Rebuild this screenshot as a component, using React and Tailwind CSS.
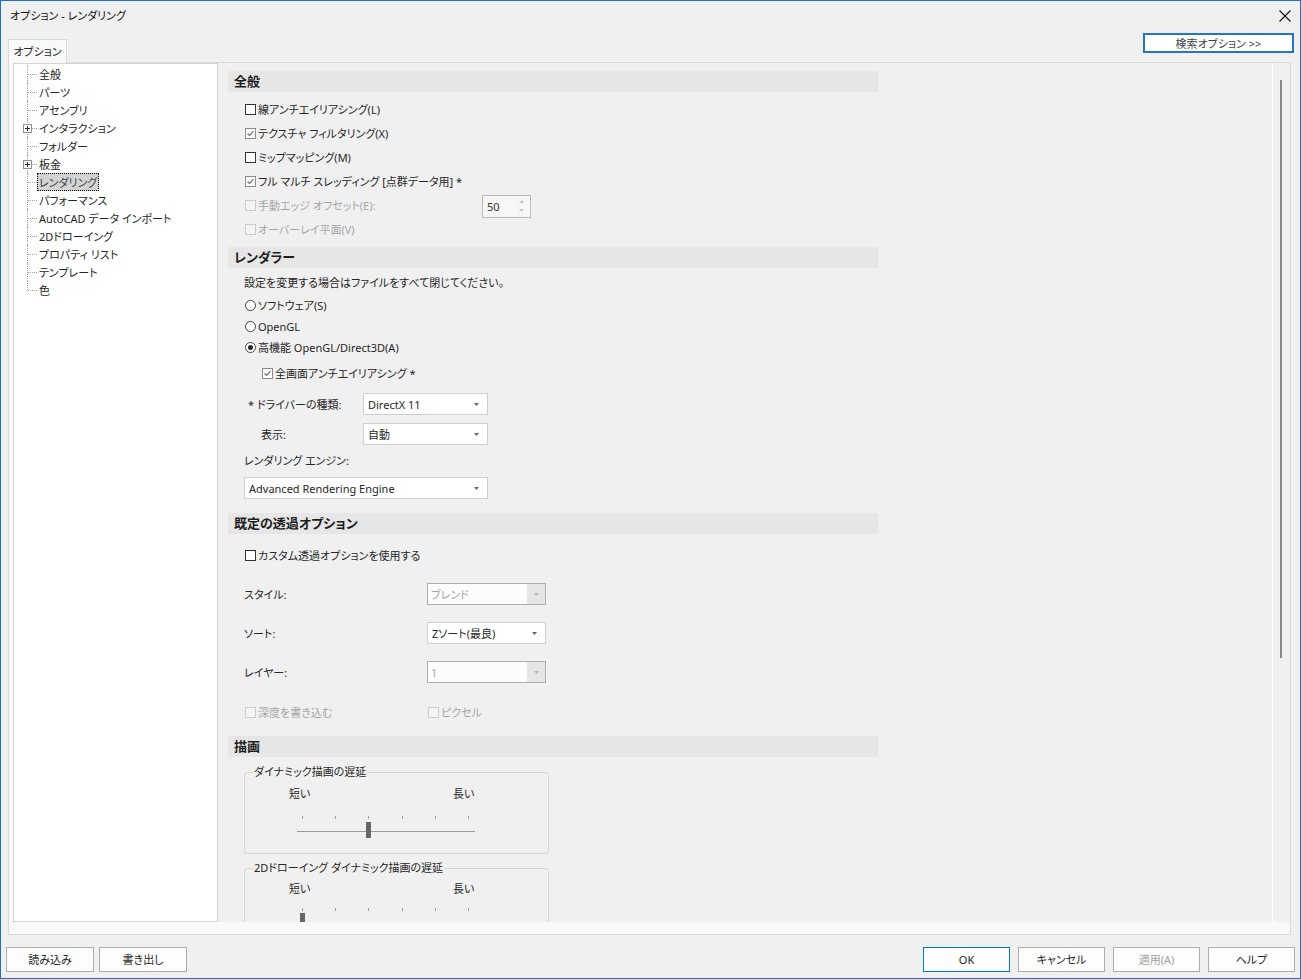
import React from 'react';

const treeItems = [
  { label: '全般' },
  { label: 'パーツ' },
  { label: 'アセンブリ' },
  { label: 'インタラクション', plus: true },
  { label: 'フォルダー' },
  { label: '板金', plus: true },
  { label: 'レンダリング', selected: true },
  { label: 'パフォーマンス' },
  { label: 'AutoCAD データ インポート' },
  { label: '2Dドローイング' },
  { label: 'プロパティ リスト' },
  { label: 'テンプレート' },
  { label: '色', last: true },
];

const Check = ({ checked, disabled }) => (
  <span
    className={`w-[11px] h-[11px] border flex items-center justify-center shrink-0 ${
      disabled ? 'border-[#cccccc] bg-[#f4f4f4]' : checked ? 'border-[#8c8c8c] bg-white' : 'border-[#333333] bg-white'
    }`}
  >
    {checked && (
      <svg width="9" height="9" viewBox="0 0 9 9">
        <path d="M1.5 4.5 L3.5 6.5 L7.5 2.2" fill="none" stroke="#707070" strokeWidth="1.2" />
      </svg>
    )}
  </span>
);

const Radio = ({ on }) => (
  <span className="w-[11px] h-[11px] rounded-full border border-[#444] bg-white flex items-center justify-center shrink-0">
    {on && <span className="w-[5px] h-[5px] rounded-full bg-[#222]" />}
  </span>
);

const Arrow = ({ color = '#555' }) => (
  <svg width="5" height="3" viewBox="0 0 5 3">
    <path d="M0 0 L5 0 L2.5 3 Z" fill={color} />
  </svg>
);

const Combo = ({ value, className = '' }) => (
  <div className={`h-[22px] bg-white border border-[#cfcfcf] flex items-center justify-between pl-[4px] pr-[8px] ${className}`}>
    <span>{value}</span>
    <Arrow color="#666" />
  </div>
);

const DisabledCombo = ({ value }) => (
  <div className="w-[119px] h-[22px] bg-[#fcfcfc] border border-[#adadad] flex items-center justify-between pl-[3px]">
    <span className="text-[#a8a8a8]">{value}</span>
    <div className="w-[18px] h-full bg-[#e6e6e6] flex items-center justify-center">
      <Arrow color="#b8b8b8" />
    </div>
  </div>
);

const Header = ({ children, className = '' }) => (
  <div className={`h-[21px] w-[650px] bg-[#e6e6e6] flex items-center pl-[6px] text-[13px] font-bold text-[#1e1e1e] ${className}`}>
    {children}
  </div>
);

const CheckRow = ({ label, checked, disabled }) => (
  <div className="h-[24px] flex items-center pl-[17px]">
    <Check checked={checked} disabled={disabled} />
    <span className={`ml-[2px] ${disabled ? 'text-[#a6a6a6]' : ''}`}>{label}</span>
  </div>
);

const Slider = ({ tickY, trackY, thumbX, thumbY }) => (
  <svg width="303" height="40" className="block">
    {[57, 90, 123, 157, 190, 223].map((x) => (
      <rect key={x} x={x} y={tickY} width="1" height="3" fill="#a0a0a0" />
    ))}
    <rect x="52" y={trackY} width="178" height="1" fill="#9a9a9a" />
    <rect x={thumbX} y={thumbY} width="5" height="16" fill="#666666" />
  </svg>
);

const Button = ({ children, primary, disabled }) => (
  <button
    className={`w-[87px] h-[25px] bg-[#fdfdfd] border flex items-center justify-center ${
      primary ? 'border-[#0078d7]' : 'border-[#adadad]'
    } ${disabled ? 'text-[#a0a0a0]' : 'text-[#262626]'}`}
  >
    {children}
  </button>
);

export default function App() {
  return (
    <div className="w-[1301px] h-[979px] bg-[#f0f0f0] border border-[#1d6fd0] flex flex-col overflow-hidden font-['Noto_Sans','Noto_Sans_CJK_JP',sans-serif] [font-feature-settings:'palt'] text-[11px] text-[#262626] leading-none whitespace-nowrap">
      {/* title bar */}
      <div className="h-[29px] flex items-center justify-between pl-[9px] pr-[9px] shrink-0">
        <span className="text-[#111]">オプション - レンダリング</span>
        <svg width="12" height="12" viewBox="0 0 12 12">
          <path d="M0.5 0.5 L11.5 11.5 M11.5 0.5 L0.5 11.5" stroke="#111" strokeWidth="1.1" />
        </svg>
      </div>

      {/* tab row */}
      <div className="h-[32px] flex justify-between shrink-0">
        <div className="ml-[7px] mt-[9px] w-[59px] h-[24px] bg-[#f9f9f9] border border-b-0 border-[#d9d9d9] flex items-center justify-center relative z-10">
          オプション
        </div>
        <button className="mt-[3px] mr-[6px] w-[151px] h-[20px] bg-white border-2 border-[#1f74d6] flex items-center justify-center text-[#444]">
          検索オプション &gt;&gt;
        </button>
      </div>

      {/* tab page */}
      <div className="ml-[7px] w-[1283px] h-[873px] bg-[#f9f9f9] border border-[#d9d9d9] flex pl-[4px] pb-[12px] shrink-0">
        {/* tree */}
        <div className="w-[205px] h-[859px] bg-white border border-[#d5d5d5] pt-[1px] shrink-0">
          {treeItems.map((it) => (
            <div key={it.label} className="h-[18px] flex items-center pl-[13px]">
              <div className="relative w-[10px] h-[18px]">
                <div className={`absolute left-0 top-0 border-l border-dotted border-[#a0a0a0] ${it.last ? 'h-[9px]' : 'h-[18px]'}`} />
                <div className="absolute left-[1px] top-[9px] w-[9px] border-t border-dotted border-[#a0a0a0]" />
                {it.plus && (
                  <div className="absolute left-[-4px] top-[5px] w-[9px] h-[9px] bg-white border border-[#919191] flex items-center justify-center">
                    <svg width="5" height="5" viewBox="0 0 5 5">
                      <path d="M0 2.5 H5 M2.5 0 V5" stroke="#1c2a5c" strokeWidth="1" />
                    </svg>
                  </div>
                )}
              </div>
              <span
                className={`h-[18px] flex items-center px-[2px] ${
                  it.selected ? 'bg-[#d3d3d3] outline-1 outline-dotted outline-black -outline-offset-1 text-[#444]' : ''
                }`}
              >
                {it.label}
              </span>
            </div>
          ))}
        </div>

        {/* content */}
        <div className="flex-1 h-[859px] bg-[#f0f0f0] flex overflow-hidden">
          <div className="flex-1 overflow-hidden pl-[10px] pt-[8px]">
            <Header>全般</Header>
            <div className="mt-[5px]">
              <CheckRow label="線アンチエイリアシング(L)" />
              <CheckRow label="テクスチャ フィルタリング(X)" checked />
              <CheckRow label="ミップマッピング(M)" />
              <CheckRow label="フル マルチ スレッディング [点群データ用] *" checked />
              <div className="h-[24px] flex items-center pl-[17px]">
                <div className="w-[237px] flex items-center">
                  <Check disabled />
                  <span className="ml-[2px] text-[#a6a6a6]">手動エッジ オフセット(E):</span>
                </div>
                <div className="w-[49px] h-[23px] mt-[2px] border border-[#b9b9b9] bg-[#f7f7f7] flex items-center justify-between pl-[4px] pr-[6px]">
                  <span className="text-[#333]">50</span>
                  <div className="flex flex-col gap-[6px]">
                    <svg width="5" height="3" viewBox="0 0 5 3"><path d="M0 3 L5 3 L2.5 0 Z" fill="#c4c4c4" /></svg>
                    <Arrow color="#c4c4c4" />
                  </div>
                </div>
              </div>
              <CheckRow label="オーバーレイ平面(V)" disabled />
            </div>

            <Header className="mt-[6px]">レンダラー</Header>
            <div className="mt-[4px] h-[20px] flex items-center pl-[16px]">設定を変更する場合はファイルをすべて閉じてください。</div>
            <div className="mt-[3px]">
              {[
                ['ソフトウェア(S)', false],
                ['OpenGL', false],
                ['高機能 OpenGL/Direct3D(A)', true],
              ].map(([label, on]) => (
                <div key={label} className="h-[21px] flex items-center pl-[17px]">
                  <Radio on={on} />
                  <span className="ml-[2px]">{label}</span>
                </div>
              ))}
            </div>
            <div className="mt-[3px] h-[24px] flex items-center pl-[34px]">
              <Check checked />
              <span className="ml-[2px]">全画面アンチエイリアシング *</span>
            </div>
            <div className="mt-[8px] h-[22px] flex items-center pl-[20px]">
              <span className="w-[115px]">* ドライバーの種類:</span>
              <Combo value="DirectX 11" className="w-[125px]" />
            </div>
            <div className="mt-[8px] h-[22px] flex items-center pl-[20px]">
              <span className="w-[115px] pl-[13px]">表示:</span>
              <Combo value="自動" className="w-[125px]" />
            </div>
            <div className="mt-[5px] h-[20px] flex items-center pl-[16px]">レンダリング エンジン:</div>
            <Combo value="Advanced Rendering Engine" className="mt-[7px] ml-[16px] w-[244px]" />

            <Header className="mt-[14px]">既定の透過オプション</Header>
            <div className="mt-[9px]">
              <CheckRow label="カスタム透過オプションを使用する" />
            </div>
            <div className="mt-[16px] h-[22px] flex items-center pl-[16px]">
              <span className="w-[183px]">スタイル:</span>
              <DisabledCombo value="ブレンド" />
            </div>
            <div className="mt-[17px] h-[22px] flex items-center pl-[16px]">
              <span className="w-[183px]">ソート:</span>
              <Combo value="Zソート(最良)" className="w-[119px]" />
            </div>
            <div className="mt-[17px] h-[22px] flex items-center pl-[16px]">
              <span className="w-[183px]">レイヤー:</span>
              <DisabledCombo value="1" />
            </div>
            <div className="mt-[17px] h-[24px] flex items-center pl-[17px]">
              <div className="w-[183px] flex items-center">
                <Check disabled />
                <span className="ml-[2px] text-[#a6a6a6]">深度を書き込む</span>
              </div>
              <Check disabled />
              <span className="ml-[2px] text-[#a6a6a6]">ピクセル</span>
            </div>

            <Header className="mt-[12px]">描画</Header>
            <fieldset className="mt-[8px] ml-[16px] w-[305px] h-[89px] border border-[#d6d6d6] rounded-[3px]">
              <legend className="ml-[8px] px-[1px] h-[14px] leading-[14px]">ダイナミック描画の遅延</legend>
              <div className="mt-[6px] h-[16px] flex items-center pl-[44px]">
                <span className="w-[164px]">短い</span>
                <span>長い</span>
              </div>
              <Slider tickY={15} trackY={30} thumbX={121} thumbY={21} />
            </fieldset>
            <fieldset className="mt-[7px] ml-[16px] w-[305px] h-[89px] border border-[#d6d6d6] rounded-[3px]">
              <legend className="ml-[8px] px-[1px] h-[14px] leading-[14px]">2Dドローイング ダイナミック描画の遅延</legend>
              <div className="mt-[5px] h-[16px] flex items-center pl-[44px]">
                <span className="w-[164px]">短い</span>
                <span>長い</span>
              </div>
              <Slider tickY={12} trackY={26} thumbX={55} thumbY={17} />
            </fieldset>
          </div>

          {/* scrollbar */}
          <div className="w-[18px] h-full border-l border-white pl-[7px] shrink-0">
            <div className="mt-[17px] w-[2px] h-[578px] bg-[#8a8a8a]" />
          </div>
        </div>
      </div>

      {/* bottom buttons */}
      <div className="mt-[12px] flex justify-between px-[5px]">
        <div className="flex gap-[5px]">
          <button className="w-[88px] h-[25px] bg-[#fdfdfd] border border-[#adadad]">読み込み</button>
          <button className="w-[88px] h-[25px] bg-[#fdfdfd] border border-[#adadad]">書き出し</button>
        </div>
        <div className="flex gap-[8px]">
          <Button primary>OK</Button>
          <Button>キャンセル</Button>
          <Button disabled>適用(A)</Button>
          <Button>ヘルプ</Button>
        </div>
      </div>
    </div>
  );
}
